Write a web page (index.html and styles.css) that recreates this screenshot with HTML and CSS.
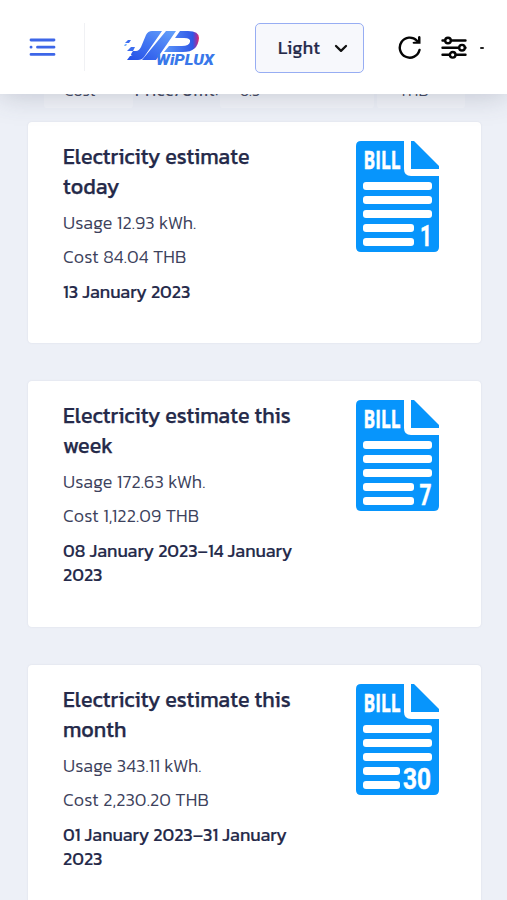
FILE: index.html
```
<!DOCTYPE html>
<html lang="en">
<head>
<meta charset="utf-8">
<title>Wiplux</title>
<link rel="stylesheet" href="styles.css">
</head>
<body>
<svg class="defs" width="0" height="0" aria-hidden="true">
  <symbol id="bill" viewBox="0 0 83 111">
    <path fill="#0795fc" d="M5 0H48V28Q48 35 55 35H83V106Q83 111 78 111H5Q0 111 0 106V5Q0 0 5 0Z"/>
    <path fill="#0795fc" d="M55 0H58L83 25V28H55Z"/>
    <g fill="#fff"><rect x="7" y="41" width="69" height="8" rx="3"/><rect x="7" y="55" width="69" height="8" rx="3"/><rect x="7" y="69" width="69" height="8" rx="3"/></g>
  </symbol>
</svg>
<header class="topbar">
  <svg class="menu" width="28" height="20" viewBox="0 0 28 20" stroke="#3d66e8" stroke-width="2.800" stroke-linecap="round"><path d="M3 3H26M9.500 10.200H26M3 10.200H3.100M3 17.400H26"/></svg>
  <span class="divider"></span>
  <svg class="logo" width="96" height="40" viewBox="0 0 96 40">
    <defs>
      <linearGradient id="g1" x1="0" y1="1" x2="1" y2="0"><stop offset="0" stop-color="#244fe6"/><stop offset=".5" stop-color="#4275f2"/><stop offset="1" stop-color="#66a3fa"/></linearGradient>
      <linearGradient id="g2" x1="0" x2="1"><stop offset="0" stop-color="#5c98fa"/><stop offset=".82" stop-color="#3058e6"/><stop offset=".92" stop-color="#8a37ae"/><stop offset="1" stop-color="#e52b65"/></linearGradient>
    </defs>
    <path fill="url(#g1)" d="M28 2H38L20 28Q18 31 14 31H3L6 27H9Q5 27 9 22H12Q15 22 17 18L22 6Q24 2 28 2ZM42 2H52L32 31H18Z"/>
    <path fill="url(#g2)" d="M56 2H64Q75 2 75 9Q74 23 59 23H40L45 17H58Q65 17 66 13Q67 9 60 9H51Z"/>
    <g fill="#3d6def"><path d="M4 11H7L5 14H1Z"/><path d="M7 18H11L9 22H3Z"/></g><path fill="#78b3ff" d="M1 15H3L2 17H0Z"/>
    <text x="32" y="36" class="logo-word" textLength="58" lengthAdjust="spacingAndGlyphs" fill="#3978ea">WiPLUX</text>
  </svg>
  <button class="theme"><span>Light</span><svg width="14" height="10" viewBox="0 0 14 10" fill="none" stroke="#111" stroke-width="2.300" stroke-linecap="round" stroke-linejoin="round"><path d="M2 3L7 7.800L12 3"/></svg></button>
  <svg class="reload" width="24" height="24" viewBox="0 0 24 24" fill="none" stroke="#050505" stroke-width="2.400" stroke-linecap="round"><path d="M21.500 15A10 10 0 1 1 18.800 5.500"/><path stroke="none" fill="#050505" d="M20 2.300Q20.200 1 21.500 1Q22.500 1 22.500 2.500V8.800H15.500Q13.800 8.300 15 7L18 6.500L20 5Z"/></svg>
  <svg class="sliders" width="26" height="24" viewBox="0 0 26 24" fill="#fff" stroke="#050505" stroke-width="2.400" stroke-linecap="round"><path d="M1.500 5.500H24.500M1.500 12.700H24.500M1.500 19.800H24.500"/><circle cx="7" cy="5.500" r="2.800"/><circle cx="21" cy="12.700" r="2.800"/><circle cx="11.700" cy="19.800" r="2.800"/></svg>
  <span class="dash"></span>
</header>
<main>
  <div class="rates"><span class="cell cost">Cost</span><span class="label">Price/Unit:</span><span class="cell value">6.5</span><span class="cell unit">THB</span></div>
  <section class="card today">
    <div class="info">
      <h2>Electricity estimate<br>today</h2>
      <p class="usage">Usage 12.93 kWh.</p>
      <p class="price">Cost 84.04 THB</p>
      <p class="date">13 January 2023</p>
    </div>
    <svg class="bill" width="83" height="111" viewBox="0 0 83 111"><use href="#bill"/><text x="7.500" y="28" class="bill-word" textLength="37" lengthAdjust="spacingAndGlyphs">BILL</text><g fill="#fff"><rect x="7" y="83" width="51" height="8" rx="3"/><rect x="7" y="97" width="51" height="8" rx="3"/></g><text class="bill-number" x="64" y="105" textLength="12" lengthAdjust="spacingAndGlyphs">1</text></svg>
  </section>
  <section class="card week">
    <div class="info">
      <h2>Electricity estimate this<br>week</h2>
      <p class="usage">Usage 172.63 kWh.</p>
      <p class="price">Cost 1,122.09 THB</p>
      <p class="date">08 January 2023–14 January<br>2023</p>
    </div>
    <svg class="bill" width="83" height="111" viewBox="0 0 83 111"><use href="#bill"/><text x="7.500" y="28" class="bill-word" textLength="37" lengthAdjust="spacingAndGlyphs">BILL</text><g fill="#fff"><rect x="7" y="83" width="51" height="8" rx="3"/><rect x="7" y="97" width="51" height="8" rx="3"/></g><text class="bill-number" x="63.500" y="105" textLength="12" lengthAdjust="spacingAndGlyphs">7</text></svg>
  </section>
  <section class="card month">
    <div class="info">
      <h2>Electricity estimate this<br>month</h2>
      <p class="usage">Usage 343.11 kWh.</p>
      <p class="price">Cost 2,230.20 THB</p>
      <p class="date">01 January 2023–31 January<br>2023</p>
    </div>
    <svg class="bill" width="83" height="111" viewBox="0 0 83 111"><use href="#bill"/><text x="7.500" y="28" class="bill-word" textLength="37" lengthAdjust="spacingAndGlyphs">BILL</text><g fill="#fff"><rect x="7" y="83" width="37" height="8" rx="3"/><rect x="7" y="97" width="37" height="8" rx="3"/></g><text class="bill-number" x="47" y="105" textLength="28" lengthAdjust="spacingAndGlyphs">30</text></svg>
  </section>
</main>
</body>
</html>
```
FILE: styles.css
```
* { box-sizing: border-box; }
html, body { height: 100%; }
body { margin: 0; overflow: hidden; display: flex; flex-direction: column; background: #edf0f7; color: #252a4a; font-family: Kanit, Roboto, "Liberation Sans", sans-serif; }
.defs { position: absolute; }
.topbar { flex: 0 0 94px; display: flex; align-items: center; padding-left: 28px; background: #fff; box-shadow: 0 0 28px rgba(60, 70, 95, .28); z-index: 1; }
.topbar > * { flex-shrink: 0; }
.divider { width: 1px; height: 48px; margin: 0 39px 0 28px; background: #f0f1f4; }
.logo { margin-top: 3px; }
.logo-word { font: italic 900 14px Roboto, sans-serif; }
.theme { display: flex; align-items: center; justify-content: space-between; width: 109px; height: 50px; margin: 1px 0 0 35px; padding: 0 15px 0 22px; border: 1.500px solid #97adf3; border-radius: 5px; background: #f7f8fc; color: #252a4a; font: 400 18px Kanit, Roboto, sans-serif; letter-spacing: .3px; -webkit-text-stroke: .2px #252a4a; }
.reload { margin-left: 34px; }
.sliders { margin-left: 19px; }
.dash { width: 4px; height: 2px; margin: 1px 0 0 13px; border-radius: 1px; background: #222; }
main { flex: 1; min-height: 0; overflow: hidden; padding: 0 26px 0 28px; }
.rates { display: flex; height: 42px; margin: -28px 16px 14px; line-height: 48px; font-size: 16px; font-weight: 300; color: #454a61; }
.cell { padding-left: 20px; background: #f2f4f9; border-radius: 3px; }
.cost { width: 89px; }
.label { width: 84px; margin-right: 3px; padding-left: 2px; font-weight: 400; letter-spacing: .7px; white-space: nowrap; }
.value { width: 154px; margin-right: 3px; }
.unit { width: 88px; padding-left: 22px; }
.card { display: flex; justify-content: space-between; padding: 19px 42px 0 35px; margin-bottom: 38px; border-radius: 4px; background: #fff; box-shadow: 0 0 2px rgba(70, 80, 120, .12); }
.today { height: 221px; }
.week { height: 246px; }
.month { height: 247px; }
.info { white-space: nowrap; margin-top: 1px; }
h2 { margin: 0 0 10px; font-size: 21.550px; line-height: 29.500px; font-weight: 400; -webkit-text-stroke: .25px #252a4a; }
p { margin: 0 0 10px; font-size: 18px; line-height: 24.300px; }
.usage, .price { color: #3d425c; font-weight: 300; letter-spacing: .15px; }
.date { font-weight: 400; -webkit-text-stroke: .15px #252a4a; }
.bill { flex-shrink: 0; }
.bill-word { font: 700 25px "Open Sans", Roboto, sans-serif; fill: #fff; stroke: #fff; stroke-width: .5px; }
.bill-number { font: 700 30px Roboto, sans-serif; fill: #fff; stroke: #fff; stroke-width: .5px; }
```
